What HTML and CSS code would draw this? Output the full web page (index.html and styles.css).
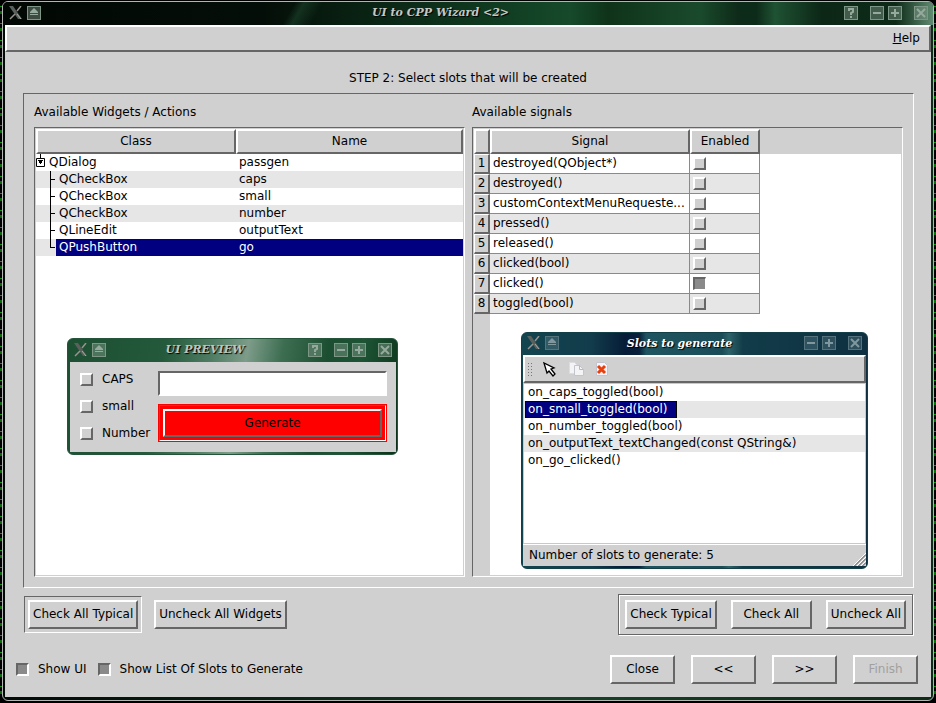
FILE: index.html
```html
<!DOCTYPE html>
<html lang="en">
<head>
    <meta charset="UTF-8">
    <meta name="viewport" content="width=device-width, initial-scale=1.0">
    <title>UI to CPP Wizard</title>
    <link rel="stylesheet" href="styles.css">
</head>
<body>
    <!-- shared icons -->
    <svg class="defs" width="0" height="0" aria-hidden="true">
        <symbol id="i-logo" viewBox="0 0 14 14">
            <path d="M0 0h4l9 13H9z" fill="#5a605c"/>
            <path d="M12 0L8 5M6 8L1 13" stroke="#98938f" stroke-width="1.500" fill="none"/>
            <path d="M8 8l4 5" stroke="#aaa" fill="none"/>
        </symbol>
        <symbol id="i-shade" viewBox="0 0 12 12"><path d="M6 1l4 4H2zM2 5h8v1H2zM2 7h8v1H2z" fill="currentColor"/></symbol>
        <symbol id="i-help" viewBox="0 0 12 12"><path d="M4 4V2h4v3L6 6v2M6 9v2" stroke="currentColor" stroke-width="2" fill="none"/></symbol>
        <symbol id="i-min" viewBox="0 0 12 12"><path d="M2 6h8" stroke="currentColor" stroke-width="2" fill="none"/></symbol>
        <symbol id="i-max" viewBox="0 0 12 12"><path d="M2 6h8M6 2v8" stroke="currentColor" stroke-width="2" fill="none"/></symbol>
        <symbol id="i-close" viewBox="0 0 12 12"><path d="M2 2l8 8M10 2l-8 8" stroke="currentColor" stroke-width="2" fill="none"/></symbol>
        <symbol id="b-mid" viewBox="0 0 20 17"><path d="M14 0h1v17h-1zM15 8h4v1h-4z"/></symbol>
        <symbol id="b-end" viewBox="0 0 20 17"><path d="M14 0h1v9h-1zM15 8h4v1h-4z"/></symbol>
    </svg>

    <div class="window main-window">
        <header class="titlebar">
            <svg class="logo"><use href="#i-logo"/></svg>
            <button class="tb" aria-label="Shade"><svg><use href="#i-shade"/></svg></button>
            <h1 class="title">UI to CPP Wizard &lt;2&gt;</h1>
            <button class="tb help" aria-label="What's this"><svg><use href="#i-help"/></svg></button>
            <button class="tb" aria-label="Minimize"><svg><use href="#i-min"/></svg></button>
            <button class="tb" aria-label="Maximize"><svg><use href="#i-max"/></svg></button>
            <button class="tb close" aria-label="Close window"><svg><use href="#i-close"/></svg></button>
        </header>

        <div class="client">
            <nav class="menubar"><a href="#"><u>H</u>elp</a></nav>
            <p class="step">STEP 2: Select slots that will be created</p>

            <main class="group">
                <section class="column">
                    <h2>Available Widgets / Actions</h2>
                    <div class="pane">
                        <table class="tree">
                            <thead>
                                <tr><th class="col-class">Class</th><th>Name</th></tr>
                            </thead>
                            <tbody>
                                <tr>
                                    <td><div class="node"><svg class="expander" viewBox="0 0 10 17"><path d="M4 0h1v4H4z"/><path d="M.5 4.500h8v8h-8z" fill="none" stroke="#000"/><path d="M2 6h5v1h-1v2h-1v1H4V9H3V7H2z"/></svg><span>QDialog</span></div></td>
                                    <td>passgen</td>
                                </tr>
                                <tr><td><div class="node"><svg class="branch"><use href="#b-mid"/></svg><span>QCheckBox</span></div></td><td>caps</td></tr>
                                <tr><td><div class="node"><svg class="branch"><use href="#b-mid"/></svg><span>QCheckBox</span></div></td><td>small</td></tr>
                                <tr><td><div class="node"><svg class="branch"><use href="#b-mid"/></svg><span>QCheckBox</span></div></td><td>number</td></tr>
                                <tr><td><div class="node"><svg class="branch"><use href="#b-mid"/></svg><span>QLineEdit</span></div></td><td>outputText</td></tr>
                                <tr class="selected"><td><div class="node"><svg class="branch"><use href="#b-end"/></svg><span>QPushButton</span></div></td><td>go</td></tr>
                            </tbody>
                        </table>

                        <div class="window preview">
                            <header class="titlebar">
                                <svg class="logo"><use href="#i-logo"/></svg>
                                <button class="tb" aria-label="Shade"><svg><use href="#i-shade"/></svg></button>
                                <h3 class="title">UI PREVIEW</h3>
                                <button class="tb help" aria-label="What's this"><svg><use href="#i-help"/></svg></button>
                                <button class="tb" aria-label="Minimize"><svg><use href="#i-min"/></svg></button>
                                <button class="tb" aria-label="Maximize"><svg><use href="#i-max"/></svg></button>
                                <button class="tb close" aria-label="Close preview"><svg><use href="#i-close"/></svg></button>
                            </header>
                            <div class="client preview-form">
                                <div class="preview-checks">
                                    <label><input type="checkbox">CAPS</label>
                                    <label><input type="checkbox">small</label>
                                    <label><input type="checkbox">Number</label>
                                </div>
                                <div class="preview-fields">
                                    <input type="text" aria-label="Output text">
                                    <button class="generate"><span class="rim"><span class="face">Generate</span></span></button>
                                </div>
                            </div>
                        </div>
                    </div>
                </section>

                <section class="column">
                    <h2>Available signals</h2>
                    <div class="pane signals-pane">
                        <table class="signals">
                            <thead>
                                <tr><th class="col-num"></th><th class="col-signal">Signal</th><th class="col-enabled">Enabled</th></tr>
                            </thead>
                            <tbody>
                                <tr><th>1</th><td>destroyed(QObject*)</td><td><input type="checkbox" aria-label="destroyed(QObject*)"></td></tr>
                                <tr><th>2</th><td>destroyed()</td><td><input type="checkbox" aria-label="destroyed()"></td></tr>
                                <tr><th>3</th><td>customContextMenuRequeste...</td><td><input type="checkbox" aria-label="customContextMenuRequested"></td></tr>
                                <tr><th>4</th><td>pressed()</td><td><input type="checkbox" aria-label="pressed()"></td></tr>
                                <tr><th>5</th><td>released()</td><td><input type="checkbox" aria-label="released()"></td></tr>
                                <tr><th>6</th><td>clicked(bool)</td><td><input type="checkbox" aria-label="clicked(bool)"></td></tr>
                                <tr><th>7</th><td>clicked()</td><td><input type="checkbox" aria-label="clicked()" checked></td></tr>
                                <tr><th>8</th><td>toggled(bool)</td><td><input type="checkbox" aria-label="toggled(bool)"></td></tr>
                            </tbody>
                        </table>

                        <div class="window slots">
                            <header class="titlebar">
                                <svg class="logo"><use href="#i-logo"/></svg>
                                <button class="tb" aria-label="Shade"><svg><use href="#i-shade"/></svg></button>
                                <h3 class="title">Slots to generate</h3>
                                <button class="tb" aria-label="Minimize"><svg><use href="#i-min"/></svg></button>
                                <button class="tb" aria-label="Maximize"><svg><use href="#i-max"/></svg></button>
                                <button class="tb close" aria-label="Close slots"><svg><use href="#i-close"/></svg></button>
                            </header>
                            <div class="client slots-client">
                                <div class="toolbar">
                                    <span class="grip"></span>
                                    <button class="tool" aria-label="Select">
                                        <svg viewBox="0 0 18 18"><path d="M3 3l3 10 2-2 4 5 2-2-4-5 3-1z" fill="#fff" stroke="#000" stroke-width="1.300"/></svg>
                                    </button>
                                    <button class="tool" aria-label="Copy">
                                        <svg viewBox="0 0 18 18"><path d="M2.500 2.500h5l4 4v7h-9z" fill="#f4f4f6" stroke="#dcdce2"/><path d="M7.500 5.500h5l4 4v6h-9z" fill="#f4f4f6" stroke="#c4c4cc"/><path d="M12.500 5.500v4h4" fill="none" stroke="#b8b8c2"/></svg>
                                    </button>
                                    <button class="tool" aria-label="Delete">
                                        <svg viewBox="0 0 18 18"><path d="M3.500 2.500h8l3 3v10h-11z" fill="#f4f4fa" stroke="#c4c4d0"/><path d="M5 6l7 7M12 6l-7 7" stroke="#e8400c" stroke-width="3" fill="none"/></svg>
                                    </button>
                                </div>
                                <ul class="slot-list">
                                    <li>on_caps_toggled(bool)</li>
                                    <li class="current"><span>on_small_toggled(bool)</span></li>
                                    <li>on_number_toggled(bool)</li>
                                    <li>on_outputText_textChanged(const QString&amp;)</li>
                                    <li>on_go_clicked()</li>
                                </ul>
                                <footer class="status">
                                    <span>Number of slots to generate: 5</span>
                                    <svg class="size-grip" viewBox="0 0 13 13"><path d="M0 13L13 0M4 13l9-9M8 13l5-5" stroke="#fff" fill="none"/><path d="M1.500 13L13 1.500M5.500 13L13 5.500M9.500 13L13 9.500" stroke="#555" fill="none"/></svg>
                                </footer>
                            </div>
                        </div>
                    </div>
                </section>
            </main>

            <div class="check-row">
                <div class="default-frame"><button class="btn">Check All Typical</button></div>
                <button class="btn">Uncheck All Widgets</button>
                <div class="signal-buttons">
                    <button class="btn">Check Typical</button>
                    <button class="btn mid">Check All</button>
                    <button class="btn">Uncheck All</button>
                </div>
            </div>

            <div class="nav-row">
                <label><input type="checkbox" checked>Show UI</label>
                <label><input type="checkbox" checked>Show List Of Slots to Generate</label>
                <div class="nav-buttons">
                    <button class="btn">Close</button>
                    <button class="btn">&lt;&lt;</button>
                    <button class="btn">&gt;&gt;</button>
                    <button class="btn" disabled>Finish</button>
                </div>
            </div>
        </div>
    </div>
</body>
</html>
```

FILE: styles.css
```css
* {
    box-sizing: border-box;
}
body {
    margin: 0;
    padding: 1px 2px 2px;
    min-height: 100vh;
    display: flex;
    background: repeating-linear-gradient(#000 0 6px, #0a9a0a 6px 7px, #000 7px 11px, #0b6b0b 11px 14px, #000 14px 17px);
    font-family: "DejaVu Sans", sans-serif;
    font-size: 12px;
    line-height: 17px;
    color: #000;
}
button, input {
    font: inherit;
    color: inherit;
    margin: 0;
}
h1, h2, h3, p, ul {
    margin: 0;
    padding: 0;
    font-size: 12px;
    font-weight: normal;
}
.defs {
    position: absolute;
}

/* window frames */
.window {
    display: flex;
    flex-direction: column;
    border-radius: 6px;
}
.client {
    display: flex;
    flex-direction: column;
    flex: 1;
    background: #d0d0d0;
}
.main-window {
    flex: 1;
    border: 1px solid #b4b4b4;
    padding: 0 2px 3px;
    background: linear-gradient(90deg, #020a06, #0a2415 30%, #154226 60%, #0d2c18);
}
.titlebar {
    display: flex;
    align-items: center;
    height: 23px;
    flex: none;
}
.main-window > .titlebar {
    margin: 0 -2px;
    padding: 0 5px 2px 6px;
    border-radius: 5px 5px 0 0;
    background: linear-gradient(120deg, transparent 31%, rgba(60, 130, 90, .25) 32%, transparent 34%),
        linear-gradient(90deg, #020804 0%, #040e08 28%, #071a0e 34%, #0f3a20 52%, #164a2a 61%, #0f3319 65%, #1a4a2c 75%, #0e2b19 79%, #0d2b19 81%, #1f5233 83%, #0c2716 88%, #0d2a18 96%, #5f8a70 100%);
}
.logo {
    width: 14px;
    height: 14px;
    margin-right: 4px;
}
.tb {
    width: 14px;
    height: 14px;
    padding: 0;
    margin-left: 4px;
    border: 1px solid #7d9686;
    background: rgba(130, 155, 140, .45);
    color: #95aa9c;
    flex: none;
}
.logo + .tb {
    margin-left: 0;
}
.tb.help {
    margin-right: 8px;
}
.tb.close {
    margin-left: 12px;
}
.tb svg {
    display: block;
    width: 12px;
    height: 12px;
}
.title {
    flex: 1;
    text-align: center;
    font-family: "DejaVu Serif", serif;
    font-size: 11px;
    font-weight: bold;
    font-style: italic;
    color: #c4c8c4;
    text-shadow: 1px 1px 1px #000;
    white-space: nowrap;
}

.menubar {
    display: flex;
    justify-content: flex-end;
    height: 27px;
    padding: 3px 9px 0;
    border: 2px solid;
    border-color: #fff #666 #666 #fff;
}
.menubar a {
    color: #000;
    text-decoration: none;
}
.step {
    margin: 18px 0 6px;
    text-align: center;
}

/* central group */
.group {
    flex: 1;
    display: grid;
    grid-template-columns: 1fr 1fr;
    gap: 7px;
    margin: 0 17px 0 18px;
    padding: 10px;
    border: 1px solid;
    border-color: #666 #fff #fff #666;
}
.column {
    display: flex;
    flex-direction: column;
    min-width: 0;
}
.column h2 {
    margin-bottom: 6px;
}
.pane {
    position: relative;
    flex: 1;
    padding: 1px;
    border: 1px solid;
    border-color: #666 #fff #fff #666;
    background: #fff;
    box-shadow: inset 0 0 0 1px #d0d0d0;
}
.signals-pane {
    background: linear-gradient(#d0d0d0, #d0d0d0) 0 0 / 100% 26px no-repeat,
        linear-gradient(#d0d0d0, #d0d0d0) 0 0 / 17px 100% no-repeat, #fff;
}
table {
    border-collapse: separate;
    border-spacing: 0;
    table-layout: fixed;
}
th {
    padding: 0;
    font-weight: normal;
    background: #d0d0d0;
    border: 2px solid;
    border-color: #fff #666 #666 #fff;
}
thead th {
    height: 25px;
}
td {
    padding: 0 3px;
    white-space: nowrap;
}
.tree {
    width: 100%;
}
.col-class {
    width: 200px;
}
.tree td:first-child {
    padding: 0;
}
.tree tbody tr:nth-child(even) {
    background: #e6e6e6;
}
.node {
    display: flex;
}
.node span {
    flex: 1;
    padding-left: 3px;
}
.branch {
    width: 20px;
    height: 17px;
}
.expander {
    width: 10px;
    height: 17px;
}
.selected span, .selected td + td {
    background: #000080;
    color: #fff;
}
.signals {
    width: 286px;
}
.col-num {
    width: 16px;
}
.col-signal {
    width: 200px;
}
.signals td {
    height: 20px;
    border: solid #8a8a8a;
    border-width: 0 1px 1px 0;
}
.signals tbody th {
    border-width: 1px 2px 2px 1px;
}
.signals tbody tr:nth-child(even) td {
    background: #e6e6e6;
}
.signals input {
    display: block;
}

/* check boxes */
input[type="checkbox"] {
    appearance: none;
    flex: none;
    width: 13px;
    height: 13px;
    background: #d0d0d0;
    border: 2px solid;
    border-color: #fff #666 #666 #fff;
}
input[type="checkbox"]:checked {
    background: #8a8a8a;
    border-color: #666 #fff #fff #666;
}
.signals input:checked {
    border-right-width: 1px;
    border-bottom-width: 1px;
}
label {
    display: flex;
    align-items: center;
    gap: 9px;
}

/* preview window */
.preview {
    position: absolute;
    left: 32px;
    top: 210px;
    width: 331px;
    padding: 0 1px 2px 2px;
    border: 1px solid #24553a;
    background: linear-gradient(100deg, #1d4f33 0%, #24593b 28%, #4f7d63 42%, #7d9c89 52%, #3d6e52 62%, #1c4e32 75%, #1d5434 85%, #0b3019 100%);
}
.preview .titlebar {
    padding: 0 4px 2px;
}
.preview .title {
    color: #bcc6be;
}
.preview-form {
    flex-direction: row;
    gap: 8px;
    padding: 9px 9px 10px 10px;
}
.preview-checks {
    display: flex;
    flex-direction: column;
    gap: 10px;
}
.preview-fields {
    flex: 1;
    display: flex;
    flex-direction: column;
    gap: 8px;
    min-width: 0;
}
.preview-fields input {
    width: 100%;
    height: 25px;
    border: 2px solid;
    border-color: #666 #fff #fff #666;
    background: #fff;
}
.generate {
    height: 38px;
    padding: 0;
    border: 1px solid #f00;
    background: #f00;
}
.rim, .face {
    display: block;
    height: 100%;
    border: 1px solid;
    border-color: #666 #fff #fff #666;
}
.rim {
    padding: 3px;
}
.face {
    border-width: 2px;
    border-color: #fff #666 #666 #fff;
    line-height: 24px;
}

/* slots window */
.slots {
    position: absolute;
    left: 48px;
    top: 204px;
    width: 347px;
    height: 237px;
    padding: 0 1px 2px;
    border: 1px solid #123f48;
    background: linear-gradient(90deg, #134450 0%, #123c4b 20%, #061c38 30%, #08203c 34%, #1f5560 36%, #1a4c58 58%, #2c6269 60%, #123c49 64%, #0e3040 100%);
}
.slots .titlebar {
    height: 22px;
    padding: 0 4px 2px;
}
.slots .title {
    color: #fff;
}
.slots .tb {
    border-color: #54737c;
    background: rgba(120, 150, 160, .3);
    color: #81979e;
}
.toolbar {
    display: flex;
    align-items: center;
    gap: 8px;
    height: 28px;
    padding: 0 2px;
    border: 2px solid;
    border-color: #fff #666 #666 #fff;
}
.grip {
    width: 6px;
    height: 15px;
    background: radial-gradient(#777 1px, transparent 1px) 0 0 / 3px 3px;
}
.tool {
    width: 18px;
    height: 18px;
    padding: 0;
    border: 0;
    background: none;
}
.tool svg {
    display: block;
    width: 18px;
    height: 18px;
}
.slot-list {
    flex: 1;
    list-style: none;
    background: #fff;
    border: 1px solid #c8c8c8;
}
.slot-list li {
    padding-left: 4px;
}
.slot-list li:nth-child(even) {
    background: #e6e6e6;
}
.slot-list .current {
    padding-left: 1px;
}
.current span {
    display: inline-block;
    padding: 0 8px 0 2px;
    line-height: 15px;
    border: 1px solid #000;
    background: #000080;
    color: #fff;
    vertical-align: top;
}
.status {
    display: flex;
    justify-content: space-between;
    align-items: center;
    height: 22px;
    padding-left: 6px;
    border-top: 1px solid #fff;
}
.size-grip {
    width: 13px;
    height: 13px;
    align-self: flex-end;
}

/* buttons */
.btn {
    height: 29px;
    padding: 0 3px;
    background: #d0d0d0;
    border: 2px solid;
    border-color: #fff #666 #666 #fff;
    white-space: nowrap;
}
.btn:disabled {
    color: #a0a0a0;
}
.check-row {
    display: flex;
    align-items: center;
    gap: 12px;
    margin: 6px 18px 0 19px;
}
.default-frame {
    padding: 3px;
    border: 1px solid;
    border-color: #666 #fff #fff #666;
}
.signal-buttons {
    display: flex;
    gap: 14px;
    margin-left: auto;
    padding: 5px 6px;
    border: 1px solid #666;
    box-shadow: inset 1px 1px #fff, 1px 1px #fff;
}
.btn.mid {
    min-width: 81px;
}
.nav-row {
    display: flex;
    align-items: center;
    gap: 11px;
    margin: 20px 13px 13px 11px;
}
.nav-buttons {
    display: flex;
    gap: 16px;
    margin-left: auto;
}
.nav-buttons .btn {
    width: 65px;
}
```
